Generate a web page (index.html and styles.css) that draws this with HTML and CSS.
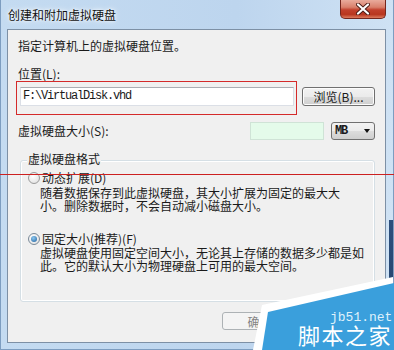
FILE: index.html
```html
<!DOCTYPE html>
<html lang="zh-CN">
<head>
    <meta charset="UTF-8">
    <title>创建和附加虚拟硬盘</title>
    <link rel="stylesheet" href="styles.css">
</head>
<body>
    <div class="window">
        <div class="titlebar">
            <span class="title">创建和附加虚拟硬盘</span>
            <button class="close">
                <svg width="14" height="12" viewBox="0 0 14 12">
                    <path d="M2 1.5 L12 10.5 M12 1.5 L2 10.5" stroke="#4a1a14" stroke-width="4" stroke-linecap="round"/>
                    <path d="M2 1.5 L12 10.5 M12 1.5 L2 10.5" stroke="#ffffff" stroke-width="2.2" stroke-linecap="round"/>
                </svg>
            </button>
        </div>

        <div class="client">
            <p class="intro">指定计算机上的虚拟硬盘位置。</p>
            <p class="field-label">位置(L):</p>

            <div class="location-row">
                <div class="highlight">
                    <div class="textbox path">F:\VirtualDisk.vhd</div>
                </div>
                <button class="btn browse">浏览(B)...</button>
            </div>

            <div class="size-row">
                <span class="size-label">虚拟硬盘大小(S):</span>
                <div class="textbox size"></div>
                <div class="combo">MB<span class="arrow"></span></div>
            </div>

            <!-- format group -->
            <div class="group">
                <div class="group-title">虚拟硬盘格式</div>
                <div class="option"><span class="radio"></span>动态扩展(D)</div>
                <p class="desc">随着数据保存到此虚拟硬盘，其大小扩展为固定的最大大<br>小。删除数据时，不会自动减小磁盘大小。</p>
                <div class="option second"><span class="radio checked"></span>固定大小(推荐)(F)</div>
                <p class="desc tight">虚拟硬盘使用固定空间大小，无论其上存储的数据多少都是如<br>此。它的默认大小为物理硬盘上可用的最大空间。</p>
            </div>

            <div class="actions">
                <button class="btn disabled">确定</button>
            </div>
        </div>

        <div class="mark-line"></div>

        <div class="watermark">
            <svg width="150" height="80" viewBox="0 0 150 80">
                <polygon points="149,7 150,80 9,80 18,35" fill="#ffffff"/>
                <polygon points="150,13 150,80 18,80 24,42" fill="#3a9fdc"/>
            </svg>
            <span class="site">jb51.net</span>
            <span class="brand">脚本之家</span>
        </div>
    </div>
</body>
</html>
```

FILE: styles.css
```css
* {
    box-sizing: border-box;
}

body {
    margin: 0;
    font-family: "Noto Sans CJK SC", sans-serif;
    font-size: 12px;
    color: #1a1a1a;
}

p {
    margin: 0;
}

.window {
    position: relative;
    width: 394px;
    height: 350px;
    overflow: hidden;
    background:
        linear-gradient(#2d4f7c, #1f3d66) right 0 top 220px / 5px 130px no-repeat,
        linear-gradient(to right, #c4dbf1, #bdd5ee 60%, #cfe2f4);
    box-shadow: inset 1px 0 #7d9dc0, inset -1px 0 #7d9dc0, inset 0 -1px #7d9dc0;
}

.titlebar {
    height: 29px;
    display: flex;
    justify-content: space-between;
    align-items: flex-start;
    padding: 0 8px;
}

.title {
    padding-top: 8px;
    line-height: 14px;
    color: #111;
    text-shadow: 0 0 6px #ffffff, 0 0 3px #ffffff;
}

.close {
    width: 46px;
    height: 19px;
    padding: 0;
    border: 1px solid #74271e;
    border-top: none;
    border-radius: 0 0 5px 5px;
    background: linear-gradient(#e9ab9c 0%, #d9806c 40%, #c2402c 55%, #b8361f 80%, #dc7a5e 100%);
    display: flex;
    align-items: center;
    justify-content: center;
}

.client {
    height: 314px;
    margin: 0 8px 0 7px;
    padding: 0 10px;
    border: 1px solid #7d90a5;
    background: #f0f0f0;
}

.intro {
    margin-top: 9px;
    line-height: 14px;
}

.field-label {
    margin-top: 14px;
    line-height: 14px;
}

.location-row {
    display: flex;
    align-items: flex-start;
    gap: 5px;
    margin-left: -2px;
}

.highlight {
    width: 281px;
    height: 34px;
    padding: 5px 0 0 3px;
    border: 1px solid #d42a2a;
}

.textbox {
    background: #ffffff;
    border: 1px solid #dbdfe6;
    border-top-color: #abadb3;
}

.path {
    width: 274px;
    height: 19px;
    padding-left: 2px;
    font-family: "Liberation Mono", monospace;
    font-size: 12px;
    letter-spacing: -1.2px;
    line-height: 17px;
}

.btn {
    padding: 0;
    font-family: inherit;
    font-size: 12px;
    color: #1a1a1a;
    border: 1px solid #707070;
    border-radius: 3px;
    background: linear-gradient(#f2f2f2 0%, #ebebeb 50%, #dddddd 51%, #cfcfcf 100%);
    box-shadow: inset 0 0 0 1px #fcfcfc;
}

.browse {
    width: 73px;
    height: 19px;
    margin-top: 6px;
    line-height: 16px;
}

.size-row {
    display: flex;
    align-items: center;
    height: 18px;
    margin-top: 7px;
}

.size-label {
    flex: 1;
    line-height: 14px;
}

.size {
    width: 74px;
    height: 18px;
    background: #e4fbea;
    border-color: #cfe3d6;
}

.combo {
    width: 44px;
    height: 18px;
    margin-left: 7px;
    padding-left: 3px;
    display: flex;
    align-items: center;
    font-family: "Liberation Mono", monospace;
    font-weight: bold;
    letter-spacing: -1.2px;
    border: 1px solid #707070;
    border-radius: 3px;
    background: linear-gradient(#f2f2f2 0%, #ebebeb 50%, #dddddd 51%, #cfcfcf 100%);
}

.arrow {
    margin-left: auto;
    margin-right: 4px;
    border-left: 3px solid transparent;
    border-right: 3px solid transparent;
    border-top: 4px solid #111;
}

.group {
    margin: 20px 0 0 2px;
    padding: 0 8px 29px;
    border: 1px solid #d5dfe5;
    border-radius: 3px;
    box-shadow: inset 0 0 0 1px #ffffff;
}

.group-title {
    width: fit-content;
    margin: -9px 0 0 -2px;
    padding: 0 1px;
    line-height: 14px;
    background: #f0f0f0;
}

.option {
    display: flex;
    align-items: center;
    height: 13px;
    line-height: 13px;
    margin-top: 5px;
}

.option.second {
    margin-top: 20px;
}

.radio {
    width: 12px;
    height: 12px;
    margin: 0 2px 0 -1px;
    border: 1px solid #9a9a9a;
    border-radius: 50%;
    background: radial-gradient(circle at 40% 35%, #ffffff, #dcdcdc);
    display: flex;
    align-items: center;
    justify-content: center;
}

.radio.checked {
    border-color: #7a8a99;
}

.radio.checked::after {
    content: "";
    width: 6px;
    height: 6px;
    border-radius: 50%;
    background: radial-gradient(circle at 40% 35%, #8cc8f0, #1f5f9c);
}

.desc {
    margin-top: 2px;
    padding-left: 11px;
    line-height: 13px;
}

.desc.tight {
    margin-top: 1px;
}

.actions {
    display: flex;
    justify-content: flex-end;
    margin-top: 10px;
    padding-right: 78px;
}

.actions .btn {
    width: 75px;
    height: 18px;
    line-height: 15px;
}

.btn.disabled {
    color: #838383;
    border-color: #adb2b5;
    background: #f4f4f4;
    box-shadow: none;
}

/* red marker line drawn over the screenshot */
.mark-line {
    position: absolute;
    top: 174px;
    left: 0;
    width: 100%;
    height: 1px;
    background: #cc2020;
}

.watermark {
    position: absolute;
    right: 0;
    bottom: 0;
    width: 150px;
    height: 80px;
}

.watermark svg {
    display: block;
}

.site {
    position: absolute;
    left: 86px;
    top: 42px;
    font-family: "Liberation Mono", monospace;
    font-size: 13px;
    line-height: 11px;
    color: #dff1fb;
}

.brand {
    position: absolute;
    left: 54px;
    top: 54px;
    font-size: 22px;
    line-height: 20px;
    letter-spacing: 1.5px;
    color: #ffffff;
}
```
